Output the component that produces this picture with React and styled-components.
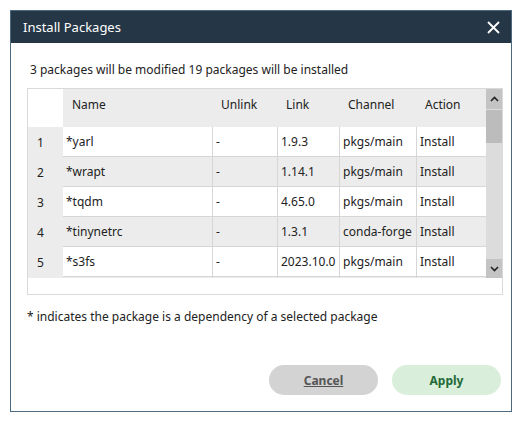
import React from 'react'
import styled, { createGlobalStyle } from 'styled-components'

const GlobalStyle = createGlobalStyle`
    body {
        margin: 0;
        background: #ffffff;
        font-family: 'Noto Sans', 'Open Sans', sans-serif;
    }
`

const Dialog = styled.div`
    margin: 10px;
    width: 502px;
    height: 402px;
    box-sizing: border-box;
    border: 1px solid #4c6b80;
    display: flex;
    flex-direction: column;
    background: #ffffff;
`

const TitleBar = styled.div`
    height: 32px;
    background: #253746;
    display: flex;
    align-items: center;
    justify-content: space-between;
    padding: 0 6px 0 12px;
    color: #ffffff;
    font-size: 13px;
`

const CloseButton = styled.button`
    border: none;
    background: none;
    padding: 0;
    width: 24px;
    height: 24px;
    display: flex;
    align-items: center;
    justify-content: center;
    cursor: pointer;
`

const Body = styled.div`
    flex: 1;
    display: flex;
    flex-direction: column;
    padding: 0 9px 0 16px;
`

const Summary = styled.div`
    font-size: 12px;
    color: #222;
    margin: 19px 0 0 3px;
    height: 16px;
    line-height: 16px;
`

const TableBox = styled.div`
    margin-top: 10px;
    width: 476px;
    height: 207px;
    box-sizing: border-box;
    border: 1px solid #dadada;
    display: flex;
    align-items: flex-start;
`

const Grid = styled.div`
    width: 458px;
    height: 189px;
    overflow: hidden;
`

const Row = styled.div`
    display: grid;
    grid-template-columns: 35px 149px 65px 62px 77px 70px;
    height: ${p => (p.$header ? 38 : 30)}px;
    background: ${p => (p.$header || p.$even ? '#ececec' : '#ffffff')};
    font-size: 12px;
    color: #222;
`

const NumCell = styled.div`
    background: ${p => (p.$header ? '#ffffff' : '#ececec')};
    display: flex;
    align-items: center;
    padding-left: 9px;
`

const Cell = styled.div`
    display: flex;
    align-items: ${p => (p.$header ? 'flex-start' : 'center')};
    padding-top: ${p => (p.$header ? 7 : 0)}px;
    padding-left: ${p => (p.$header ? 9 : 3)}px;
    border-left: ${p => (p.$header || p.$first ? 'none' : '1px solid #d6d6d6')};
    border-bottom: ${p => (p.$header ? 'none' : '1px solid #d6d6d6')};
    white-space: nowrap;
    overflow: hidden;
`

const ScrollBar = styled.div`
    width: 16px;
    height: 189px;
    display: flex;
    flex-direction: column;
    background: #dcdcdc;
`

const ScrollArrow = styled.div`
    height: ${p => p.$h}px;
    background: #c4c4c4;
    display: flex;
    align-items: center;
    justify-content: center;
    margin-bottom: ${p => (p.$top ? 1 : 0)}px;
`

const Thumb = styled.div`
    height: 33px;
    background: #bcbcbc;
`

const Track = styled.div`
    flex: 1;
`

const Note = styled.div`
    margin-top: 14px;
    font-size: 12px;
    color: #222;
    height: 16px;
    line-height: 16px;
`

const Footer = styled.div`
    margin-top: auto;
    display: flex;
    justify-content: flex-end;
    gap: 14px;
    padding: 0 1px 16px 0;
`

const PillButton = styled.button`
    width: 109px;
    height: 30px;
    border: none;
    border-radius: 15px;
    background: ${p => (p.$primary ? '#d9eedb' : '#d3d3d3')};
    color: ${p => (p.$primary ? '#1f6b38' : '#555555')};
    font-family: inherit;
    font-size: 12px;
    font-weight: 700;
    text-decoration: ${p => (p.$primary ? 'none' : 'underline')};
    cursor: pointer;
`

const packages = [
    { name: '*yarl', unlink: '-', link: '1.9.3', channel: 'pkgs/main', action: 'Install' },
    { name: '*wrapt', unlink: '-', link: '1.14.1', channel: 'pkgs/main', action: 'Install' },
    { name: '*tqdm', unlink: '-', link: '4.65.0', channel: 'pkgs/main', action: 'Install' },
    { name: '*tinynetrc', unlink: '-', link: '1.3.1', channel: 'conda-forge', action: 'Install' },
    { name: '*s3fs', unlink: '-', link: '2023.10.0', channel: 'pkgs/main', action: 'Install' },
    { name: '', unlink: '', link: '', channel: '', action: '' },
]

const Chevron = ({ up }) => (
    <svg width="9" height="6" viewBox="0 0 9 6">
        <path
            d={up ? 'M1 5 L4.5 1.5 L8 5' : 'M1 1 L4.5 4.5 L8 1'}
            fill="none"
            stroke="#222"
            strokeWidth="1.6"
        />
    </svg>
)

export default function App() {
    return (
        <>
            <GlobalStyle />
            <Dialog>
                <TitleBar>
                    <span>Install Packages</span>
                    <CloseButton>
                        <svg width="13" height="13" viewBox="0 0 13 13">
                            <path d="M1 1 L12 12 M12 1 L1 12" stroke="#fff" strokeWidth="1.8" />
                        </svg>
                    </CloseButton>
                </TitleBar>
                <Body>
                    <Summary>3 packages will be modified 19 packages will be installed</Summary>
                    <TableBox>
                        <Grid>
                            <Row $header>
                                <NumCell $header />
                                <Cell $header>Name</Cell>
                                <Cell $header>Unlink</Cell>
                                <Cell $header>Link</Cell>
                                <Cell $header>Channel</Cell>
                                <Cell $header>Action</Cell>
                            </Row>
                            {packages.map((p, i) => (
                                <Row key={i} $even={i % 2 === 1}>
                                    <NumCell>{p.name ? i + 1 : ''}</NumCell>
                                    <Cell $first>{p.name}</Cell>
                                    <Cell>{p.unlink}</Cell>
                                    <Cell>{p.link}</Cell>
                                    <Cell>{p.channel}</Cell>
                                    <Cell>{p.action}</Cell>
                                </Row>
                            ))}
                        </Grid>
                        <ScrollBar>
                            <ScrollArrow $h={20} $top>
                                <Chevron up />
                            </ScrollArrow>
                            <Thumb />
                            <Track />
                            <ScrollArrow $h={19}>
                                <Chevron />
                            </ScrollArrow>
                        </ScrollBar>
                    </TableBox>
                    <Note>* indicates the package is a dependency of a selected package</Note>
                    <Footer>
                        <PillButton>Cancel</PillButton>
                        <PillButton $primary>Apply</PillButton>
                    </Footer>
                </Body>
            </Dialog>
        </>
    )
}
